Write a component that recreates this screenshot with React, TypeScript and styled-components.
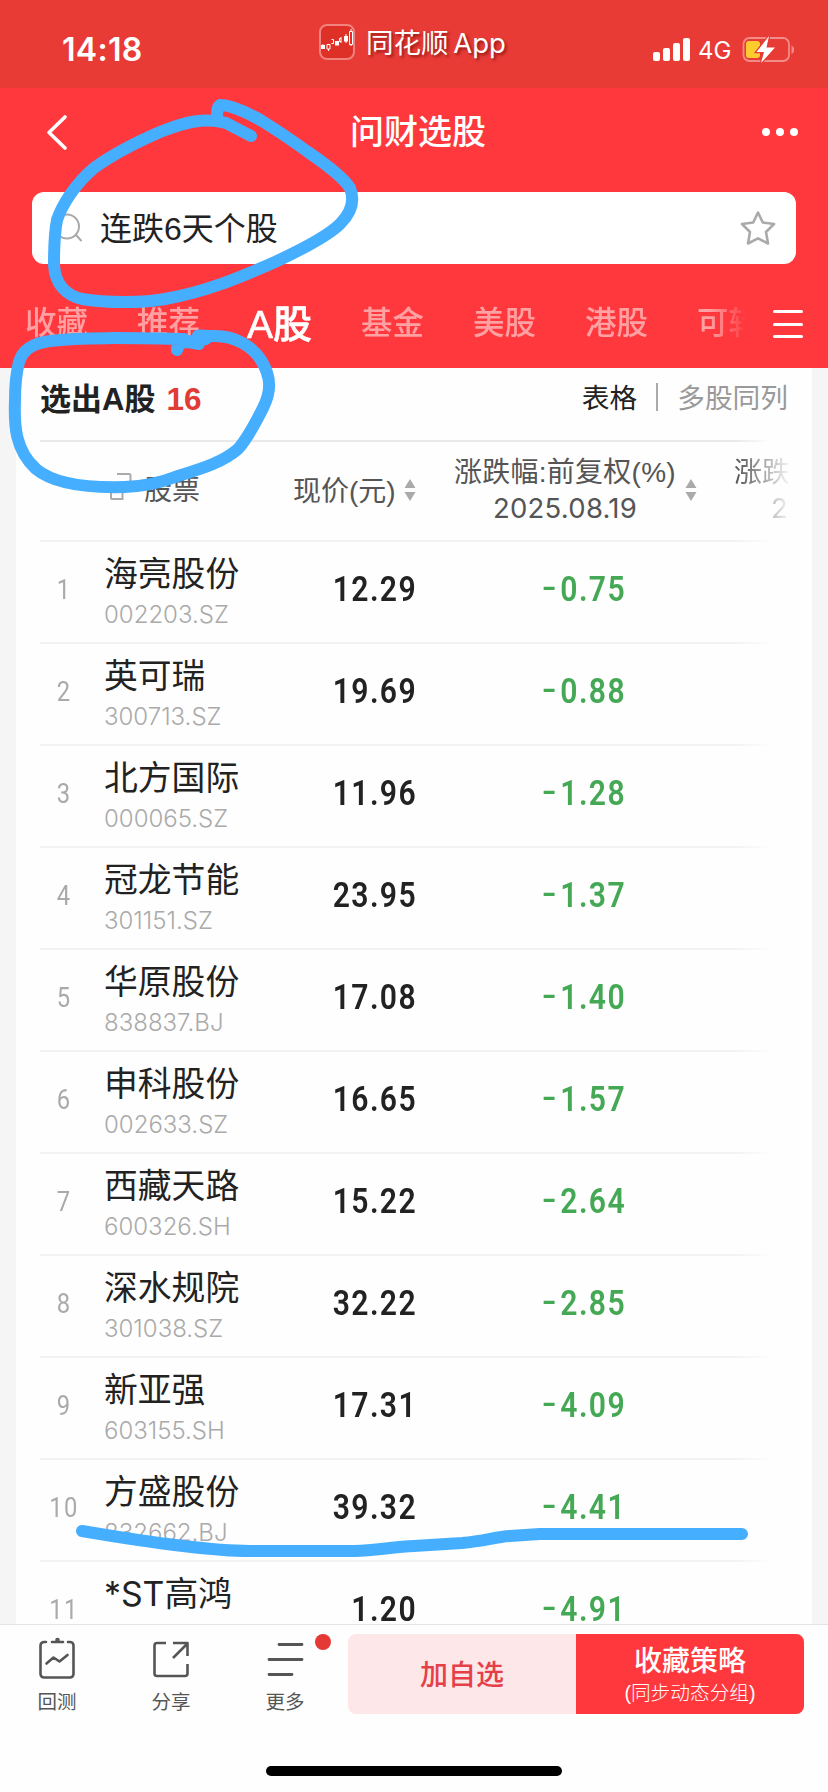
import React from "react";
import styled, { createGlobalStyle } from "styled-components";

const GlobalStyle = createGlobalStyle`
  * { box-sizing: border-box; }
  html, body { margin: 0; padding: 0; background: #fefefe; }
  body {
    font-family: "Liberation Sans", "Noto Sans CJK SC", sans-serif;
    color: #222;
    overflow: hidden;
  }
`;

const Screen = styled.div`
  position: relative;
  width: 828px;
  height: 1792px;
  display: flex;
  flex-direction: column;
  overflow: hidden;
  background: #fefefe;
`;

const StatusBar = styled.header`
  flex: none;
  height: 88px;
  display: grid;
  grid-template-columns: 319px 1fr 176px;
  background: #e83b36;
  color: #fff;
`;

const Clock = styled.div`
  padding: 30px 0 0 62px;
  font: 600 32px/40px Inter, sans-serif;
  letter-spacing: 0.3px;
`;

const AppBadge = styled.div`
  display: flex;
  align-items: center;
  gap: 11px;
  height: 84px;
`;

const AppName = styled.span`
  padding-top: 1px;
  font-family: Inter, "Noto Sans CJK SC", sans-serif;
  font-size: 27.5px;
  line-height: 40px;
  word-spacing: -3px;
  text-shadow: 2px 2px 3px rgba(90, 0, 0, 0.6);
  white-space: nowrap;
`;

const Signals = styled.div`
  display: flex;
  align-items: flex-start;
  padding-top: 36px;
`;

const Network = styled.span`
  width: 43px;
  margin-left: 8px;
  font: 400 24px/30px Inter, sans-serif;
`;

const NavBar = styled.nav`
  flex: none;
  height: 104px;
  display: grid;
  grid-template-columns: 100px 1fr 100px;
  background: #ff383e;
  color: #fff;
`;

const NavTitle = styled.h1`
  margin: 0;
  padding: 24px 0 0 8px;
  text-align: center;
  font-size: 34px;
  font-weight: 500;
  line-height: 40px;
`;

const BackSlot = styled.div`
  padding: 26px 0 0 45px;
`;

const MoreSlot = styled.div`
  display: flex;
  gap: 6px;
  padding: 40px 0 0 34px;
`;

const MoreDot = styled.i`
  width: 8px;
  height: 8px;
  border-radius: 50%;
  background: #fff;
`;

const SearchArea = styled.div`
  flex: none;
  padding: 0 32px;
  background: #ff383e;
`;

const SearchBox = styled.div`
  height: 72px;
  display: flex;
  align-items: center;
  border-radius: 12px;
  background: #fff;
  padding: 0 20px 0 22px;
`;

const Query = styled.span`
  flex: 1;
  margin-left: 16px;
  padding-top: 2px;
  font-size: 32px;
  line-height: 40px;
  color: #222;
`;

const TabBar = styled.div`
  flex: none;
  height: 104px;
  display: flex;
  background: #ff383e;
  padding-left: 25px;
`;

const TabStrip = styled.div`
  width: 720px;
  height: 104px;
  display: flex;
  gap: 48px;
  padding-top: 39px;
  mask-image: linear-gradient(to right, #000 685px, transparent 722px);
`;

const Tab = styled.span<{ $active?: boolean }>`
  flex: none;
  width: 64px;
  padding-top: ${(p) => (p.$active ? 2 : 0)}px;
  margin-left: ${(p) => (p.$active ? "-2px" : "0")};
  margin-right: ${(p) => (p.$active ? "2px" : "0")};
  white-space: nowrap;
  font-size: ${(p) => (p.$active ? 39 : 31.5)}px;
  font-weight: 500;
  line-height: 40px;
  -webkit-text-stroke: ${(p) => (p.$active ? "0.6px #fff" : "0")};
  color: ${(p) => (p.$active ? "#fff" : "#ffa0a2")};
`;

const MenuLines = styled.div`
  width: 30px;
  margin: 46px 0 0 28px;
  display: flex;
  flex-direction: column;
  gap: 9.5px;
`;

const MenuLine = styled.i`
  height: 3px;
  border-radius: 2px;
  background: #fff;
`;

const Body = styled.main`
  flex: none;
  height: 1256px;
  padding: 0 16px;
  background: #f5f5f5;
  overflow: hidden;
`;

const Sheet = styled.section`
  height: 1256px;
  padding-left: 24px;
  background: #fefefe;
  overflow: hidden;
`;

const Rule = styled.hr<{ $strong?: boolean }>`
  margin: 0;
  border: 0;
  width: 736px;
  height: 2px;
  background: linear-gradient(
    to right,
    ${(p) => (p.$strong ? "#e9e9e9" : "#f2f2f2")} 695px,
    transparent 732px
  );
`;

const ResultBar = styled.div`
  width: 748px;
  height: 72px;
  display: flex;
  align-items: flex-start;
  padding-top: 11px;
  line-height: 40px;
  white-space: nowrap;
`;

const ResultTitle = styled.h2`
  flex: 1;
  margin: 0;
  font-size: 31px;
  font-weight: 700;
  line-height: 40px;
`;

const ResultCount = styled.span`
  margin-left: 11px;
  color: #e13b36;
  font-size: 31.5px;
`;

const ViewOption = styled.span<{ $active?: boolean }>`
  font-size: 27.7px;
  color: ${(p) => (p.$active ? "#222" : "#999")};
`;

const ViewDivider = styled.i`
  width: 2px;
  height: 28px;
  margin: 4px 19px 0 19px;
  background: #aaa;
`;

const HeadRow = styled.div`
  width: 750px;
  height: 98px;
  display: grid;
  grid-template-columns: 250px 152px 260px 86px;
  color: #555;
  font-size: 28px;
  line-height: 37px;
  white-space: nowrap;
`;

const StockHead = styled.div`
  display: flex;
  align-items: flex-start;
  gap: 12px;
  padding: 30px 0 0 68px;

  svg { margin-top: -1px; }
`;

const PriceHead = styled.div`
  display: flex;
  align-items: flex-start;
  gap: 8px;
  padding: 31px 0 0 3px;
`;

const ChangeHead = styled.div`
  display: flex;
  align-items: flex-start;
  gap: 9px;
  padding: 12px 0 0 12px;
  text-align: center;
`;

const HeadLines = styled.div`
  width: 222px;
  letter-spacing: 0.25px;
`;

const ClippedHead = styled.div`
  padding: 12px 0 0 32px;
  mask-image: linear-gradient(to right, #000 35px, transparent 90px);
`;

const ClippedDate = styled.div`
  padding-left: 37px;
`;

const DateText = styled.div`
  font-family: Inter, sans-serif;
  font-size: 27.5px;
  line-height: 35px;
`;

const SortBox = styled.svg<{ $top: number }>`
  flex: none;
  width: 12px;
  height: 24px;
  margin-top: ${(p) => p.$top}px;
`;

const Row = styled.div`
  height: 100px;
  display: grid;
  grid-template-columns: 64px 198px 115px 209px;
`;

const Rank = styled.div`
  width: 48px;
  padding-top: 28px;
  text-align: center;
  font: 400 27px/40px Roboto, sans-serif;
  letter-spacing: 1.5px;
  color: #aaa;
  transform: scaleX(0.88);
`;

const Name = styled.div`
  padding-top: 11px;
  font-family: Inter, "Noto Sans CJK SC", sans-serif;
  font-size: 33.8px;
  line-height: 42px;
  white-space: nowrap;
`;

const Code = styled.div`
  margin-top: 5px;
  font: 300 24px/30px Inter, sans-serif;
  color: #aaa;
`;

const Figure = styled.div<{ $down?: boolean }>`
  padding-top: 26px;
  text-align: right;
  font: 600 35px/44px Roboto, sans-serif;
  letter-spacing: 1.6px;
  transform: scaleX(0.86);
  transform-origin: right center;
  color: ${(p) => (p.$down ? "#44a854" : "#222")};
`;

const Sign = styled.span`
  display: inline-block;
  margin-right: 2px;
  transform: translateY(-2px) scale(1.35, 0.9);
  transform-origin: right center;
`;

const BottomBar = styled.footer`
  flex: none;
  height: 168px;
  border-top: 1px solid #e4e4e4;
  background: #fefefe;
`;

const Actions = styled.div`
  height: 141px;
  display: grid;
  grid-template-columns: 114px 114px 120px 228px 228px;
  align-items: start;
`;

const Action = styled.div`
  position: relative;
  width: 114px;
  padding-top: 12px;
  display: flex;
  flex-direction: column;
  align-items: center;
  color: #555;
  font-size: 19.5px;
  line-height: 28px;

  svg { display: block; margin-bottom: 7px; }
`;

const UnreadDot = styled.i`
  position: absolute;
  left: 87px;
  top: 9px;
  width: 16px;
  height: 16px;
  border-radius: 50%;
  background: #e53935;
`;

const WatchButton = styled.button`
  height: 80px;
  margin-top: 9px;
  padding: 3px 0 0;
  border: 0;
  border-radius: 8px 0 0 8px;
  background: #fde7e9;
  color: #e5404a;
  font: 500 28px/40px "Liberation Sans", "Noto Sans CJK SC", sans-serif;
`;

const SaveButton = styled.button`
  height: 80px;
  margin-top: 9px;
  padding: 3px 0 0;
  border: 0;
  border-radius: 0 8px 8px 0;
  background: #ff383e;
  color: #fff;
  font: 500 28px/34px "Liberation Sans", "Noto Sans CJK SC", sans-serif;
`;

const SaveNote = styled.div`
  font-size: 19.7px;
  font-weight: 300;
  line-height: 28px;
`;

const HomeIndicator = styled.div`
  width: 296px;
  height: 10px;
  margin-left: 266px;
  border-radius: 5px;
  background: #000;
`;

const Ink = styled.svg`
  position: absolute;
  inset: 0;
  width: 828px;
  height: 1792px;
  pointer-events: none;
`;

const tabs = ["收藏", "推荐", "A股", "基金", "美股", "港股", "可转"];

const stocks = [
  ["海亮股份", "002203.SZ", "12.29", "0.75"],
  ["英可瑞", "300713.SZ", "19.69", "0.88"],
  ["北方国际", "000065.SZ", "11.96", "1.28"],
  ["冠龙节能", "301151.SZ", "23.95", "1.37"],
  ["华原股份", "838837.BJ", "17.08", "1.40"],
  ["申科股份", "002633.SZ", "16.65", "1.57"],
  ["西藏天路", "600326.SH", "15.22", "2.64"],
  ["深水规院", "301038.SZ", "32.22", "2.85"],
  ["新亚强", "603155.SH", "17.31", "4.09"],
  ["方盛股份", "832662.BJ", "39.32", "4.41"],
  ["*ST高鸿", "", "1.20", "4.91"],
];

const SortArrows = ({ top }: { top: number }) => (
  <SortBox viewBox="0 0 12 24" $top={top}>
    <path d="M6 1 11.500 10H.5ZM6 23 .5 14H11.500Z" fill="#aaa" />
  </SortBox>
);

const AppIcon = () => (
  <svg width="36" height="36" viewBox="0 0 36 36">
    <rect x="1" y="1" width="34" height="34" rx="7" fill="#df3028" stroke="#f0837d" strokeWidth="2" />
    <g fill="#fff">
      <rect x="2" y="21" width="4" height="4" />
      <rect x="3.500" y="20" width="1" height="5" />
      <rect x="16" y="17" width="4" height="4.500" />
      <rect x="25" y="12" width="4" height="5.500" />
      <rect x="26.500" y="10" width="1" height="9" />
    </g>
    <g fill="none" stroke="#fff">
      <path d="M8 20.500h3v4.500H8zM9.500 25v2M12.500 15.500h2v4h-2M22 14.500h-1.500v3H22M22 13v6M30.500 7.500h3v13h-3zM32 5v2.500M32 20.500v1.500" />
    </g>
  </svg>
);

const SignalIcon = () => (
  <svg width="38" height="26" viewBox="0 0 38 26" fill="#fff">
    <rect x="1" y="16" width="7" height="9" rx="2" />
    <rect x="11" y="12" width="7" height="13" rx="2" />
    <rect x="21" y="7" width="7" height="18" rx="2" />
    <rect x="31" y="2" width="7" height="23" rx="2" />
  </svg>
);

const BatteryIcon = () => (
  <svg width="56" height="28" viewBox="0 0 56 28">
    <rect x="2.500" y="2" width="45.500" height="23" rx="6" fill="none" stroke="#f28c88" strokeWidth="1.800" />
    <path d="M50.500 9.500c3.500 1.500 3.500 7 0 8.500z" fill="#f28c88" />
    <rect x="5" y="5" width="14" height="17" rx="3" fill="#fbcb2f" />
    <path d="M28 0 15.500 16h7.500l-3 11L34 11.500h-8.500z" fill="#fff" stroke="#e83b36" strokeWidth="2.500" paintOrder="stroke" />
  </svg>
);

export default function App() {
  return (
    <Screen>
      <GlobalStyle />
      <StatusBar>
        <Clock>14:18</Clock>
        <AppBadge>
          <AppIcon />
          <AppName>同花顺 App</AppName>
        </AppBadge>
        <Signals>
          <SignalIcon />
          <Network>4G</Network>
          <BatteryIcon />
        </Signals>
      </StatusBar>

      <NavBar>
        <BackSlot>
          <svg width="24" height="38" viewBox="0 0 24 38">
            <path d="M20 3 4 18.500 20 34" fill="none" stroke="#fff" strokeWidth="3.600" strokeLinecap="round" strokeLinejoin="round" />
          </svg>
        </BackSlot>
        <NavTitle>问财选股</NavTitle>
        <MoreSlot>
          <MoreDot />
          <MoreDot />
          <MoreDot />
        </MoreSlot>
      </NavBar>

      <SearchArea>
        <SearchBox>
          <svg width="30" height="32" viewBox="0 0 30 32" fill="none" stroke="#aaa" strokeWidth="2" strokeLinecap="round">
            <circle cx="13" cy="14.500" r="12" />
            <path d="m22 23 5 5.500" />
          </svg>
          <Query>连跌6天个股</Query>
          <svg width="36" height="36" viewBox="0 0 36 36">
            <path
              d="M18 2.500 22.800 12.500 34 14 26 22 28 33.500 18 28.300 8 33.500 10 22 2 14 13.200 12.500Z"
              fill="none"
              stroke="#aaa"
              strokeWidth="2.600"
              strokeLinejoin="round"
            />
          </svg>
        </SearchBox>
      </SearchArea>

      <TabBar>
        <TabStrip>
          {tabs.map((t) => (
            <Tab key={t} $active={t === "A股"}>{t}</Tab>
          ))}
        </TabStrip>
        <MenuLines>
          <MenuLine />
          <MenuLine />
          <MenuLine />
        </MenuLines>
      </TabBar>

      <Body>
        <Sheet>
          <ResultBar>
            <ResultTitle>
              选出A股<ResultCount>16</ResultCount>
            </ResultTitle>
            <ViewOption $active>表格</ViewOption>
            <ViewDivider />
            <ViewOption>多股同列</ViewOption>
          </ResultBar>
          <Rule $strong />
          <HeadRow>
            <StockHead>
              <svg width="24" height="32" viewBox="0 0 24 32" fill="none" stroke="#aaa" strokeWidth="2">
                <path d="M9 3h12a1.500 1.500 0 0 1 1.500 1.500V19H17M3 14h11.500v14H4a1 1 0 0 1-1-1Z" />
              </svg>
              股票
            </StockHead>
            <PriceHead>
              现价(元)
              <SortArrows top={5} />
            </PriceHead>
            <ChangeHead>
              <HeadLines>
                涨跌幅:前复权(%)
                <DateText>2025.08.19</DateText>
              </HeadLines>
              <SortArrows top={24} />
            </ChangeHead>
            <ClippedHead>
              涨跌
              <ClippedDate>
                <DateText>2</DateText>
              </ClippedDate>
            </ClippedHead>
          </HeadRow>
          {stocks.map(([name, code, price, drop], i) => (
            <React.Fragment key={name}>
              <Rule />
              <Row>
                <Rank>{i + 1}</Rank>
                <div>
                  <Name>{name}</Name>
                  {code && <Code>{code}</Code>}
                </div>
                <Figure>{price}</Figure>
                <Figure $down>
                  <Sign>-</Sign>
                  {drop}
                </Figure>
              </Row>
            </React.Fragment>
          ))}
        </Sheet>
      </Body>

      <BottomBar>
        <Actions>
          <Action>
            <svg width="40" height="44" viewBox="0 0 40 44" fill="none" stroke="#555" strokeWidth="2.600" strokeLinecap="round" strokeLinejoin="round">
              <path d="M9 5H7a3.500 3.500 0 0 0-3.500 3.500v28.500A3.500 3.500 0 0 0 7 40.500h26a3.500 3.500 0 0 0 3.500-3.500V8.500A3.500 3.500 0 0 0 33 5h-2M15 5h11M9.500 26.500l7-6 6 4 8-6.500" />
              <circle cx="20.500" cy="3" r="1" />
            </svg>
            回测
          </Action>
          <Action>
            <svg width="40" height="44" viewBox="0 0 40 44" fill="none" stroke="#555" strokeWidth="2.600" strokeLinejoin="round">
              <path d="M15 6H6a2.500 2.500 0 0 0-2.500 2.500v28A2.500 2.500 0 0 0 6 39h28a2.500 2.500 0 0 0 2.500-2.500V27M22 6h14.500v13M22 21 36 7" />
            </svg>
            分享
          </Action>
          <Action>
            <svg width="40" height="44" viewBox="0 0 40 44" fill="none" stroke="#555" strokeWidth="2.800" strokeLinecap="round">
              <path d="M14 7.500h23M4 22.500h33M4 37.500h23" />
            </svg>
            更多
            <UnreadDot />
          </Action>
          <WatchButton>加自选</WatchButton>
          <SaveButton>
            收藏策略
            <SaveNote>(同步动态分组)</SaveNote>
          </SaveButton>
        </Actions>
        <HomeIndicator />
      </BottomBar>

      <Ink viewBox="0 0 828 1792" fill="none" stroke="#46aeff" strokeWidth="12" strokeLinecap="round" strokeLinejoin="round">
        <path d="M251 136 L226 123 C205 117 185 122 160 132 C130 145 105 160 94 168 C75 184 62 205 57 220 C54 235 54 250 54 265 C55 283 65 295 82 299 C105 303 145 303 165 299 C210 291 245 275 275 262 C305 248 330 234 340 224 C354 210 354 198 350 188 C345 180 330 167 308 152 C290 139 275 129 262 121 C248 113 230 105 220 105 C217 107 217 112 217 120" />
        <path d="M199 344 L178 340 L177 350 L180 343 L206 339 C190 334 200 336 215 336 C235 336 252 346 261 360 C272 378 271 392 263 408 C256 422 248 438 238 449 C222 463 200 469 175 477 C160 483 145 486 125 487 C90 488 55 485 36 469 C15 450 14 425 15 400 C15 385 17 370 19 362 C23 348 35 343 50 341 C80 337 130 338 184 339" />
        <path d="M82 1531 C135 1540 205 1551 250 1551 H355 C375 1550 395 1547 414 1546 L462 1543 C485 1541 495 1537 510 1536 L540 1534 H742" />
      </Ink>
    </Screen>
  );
}
